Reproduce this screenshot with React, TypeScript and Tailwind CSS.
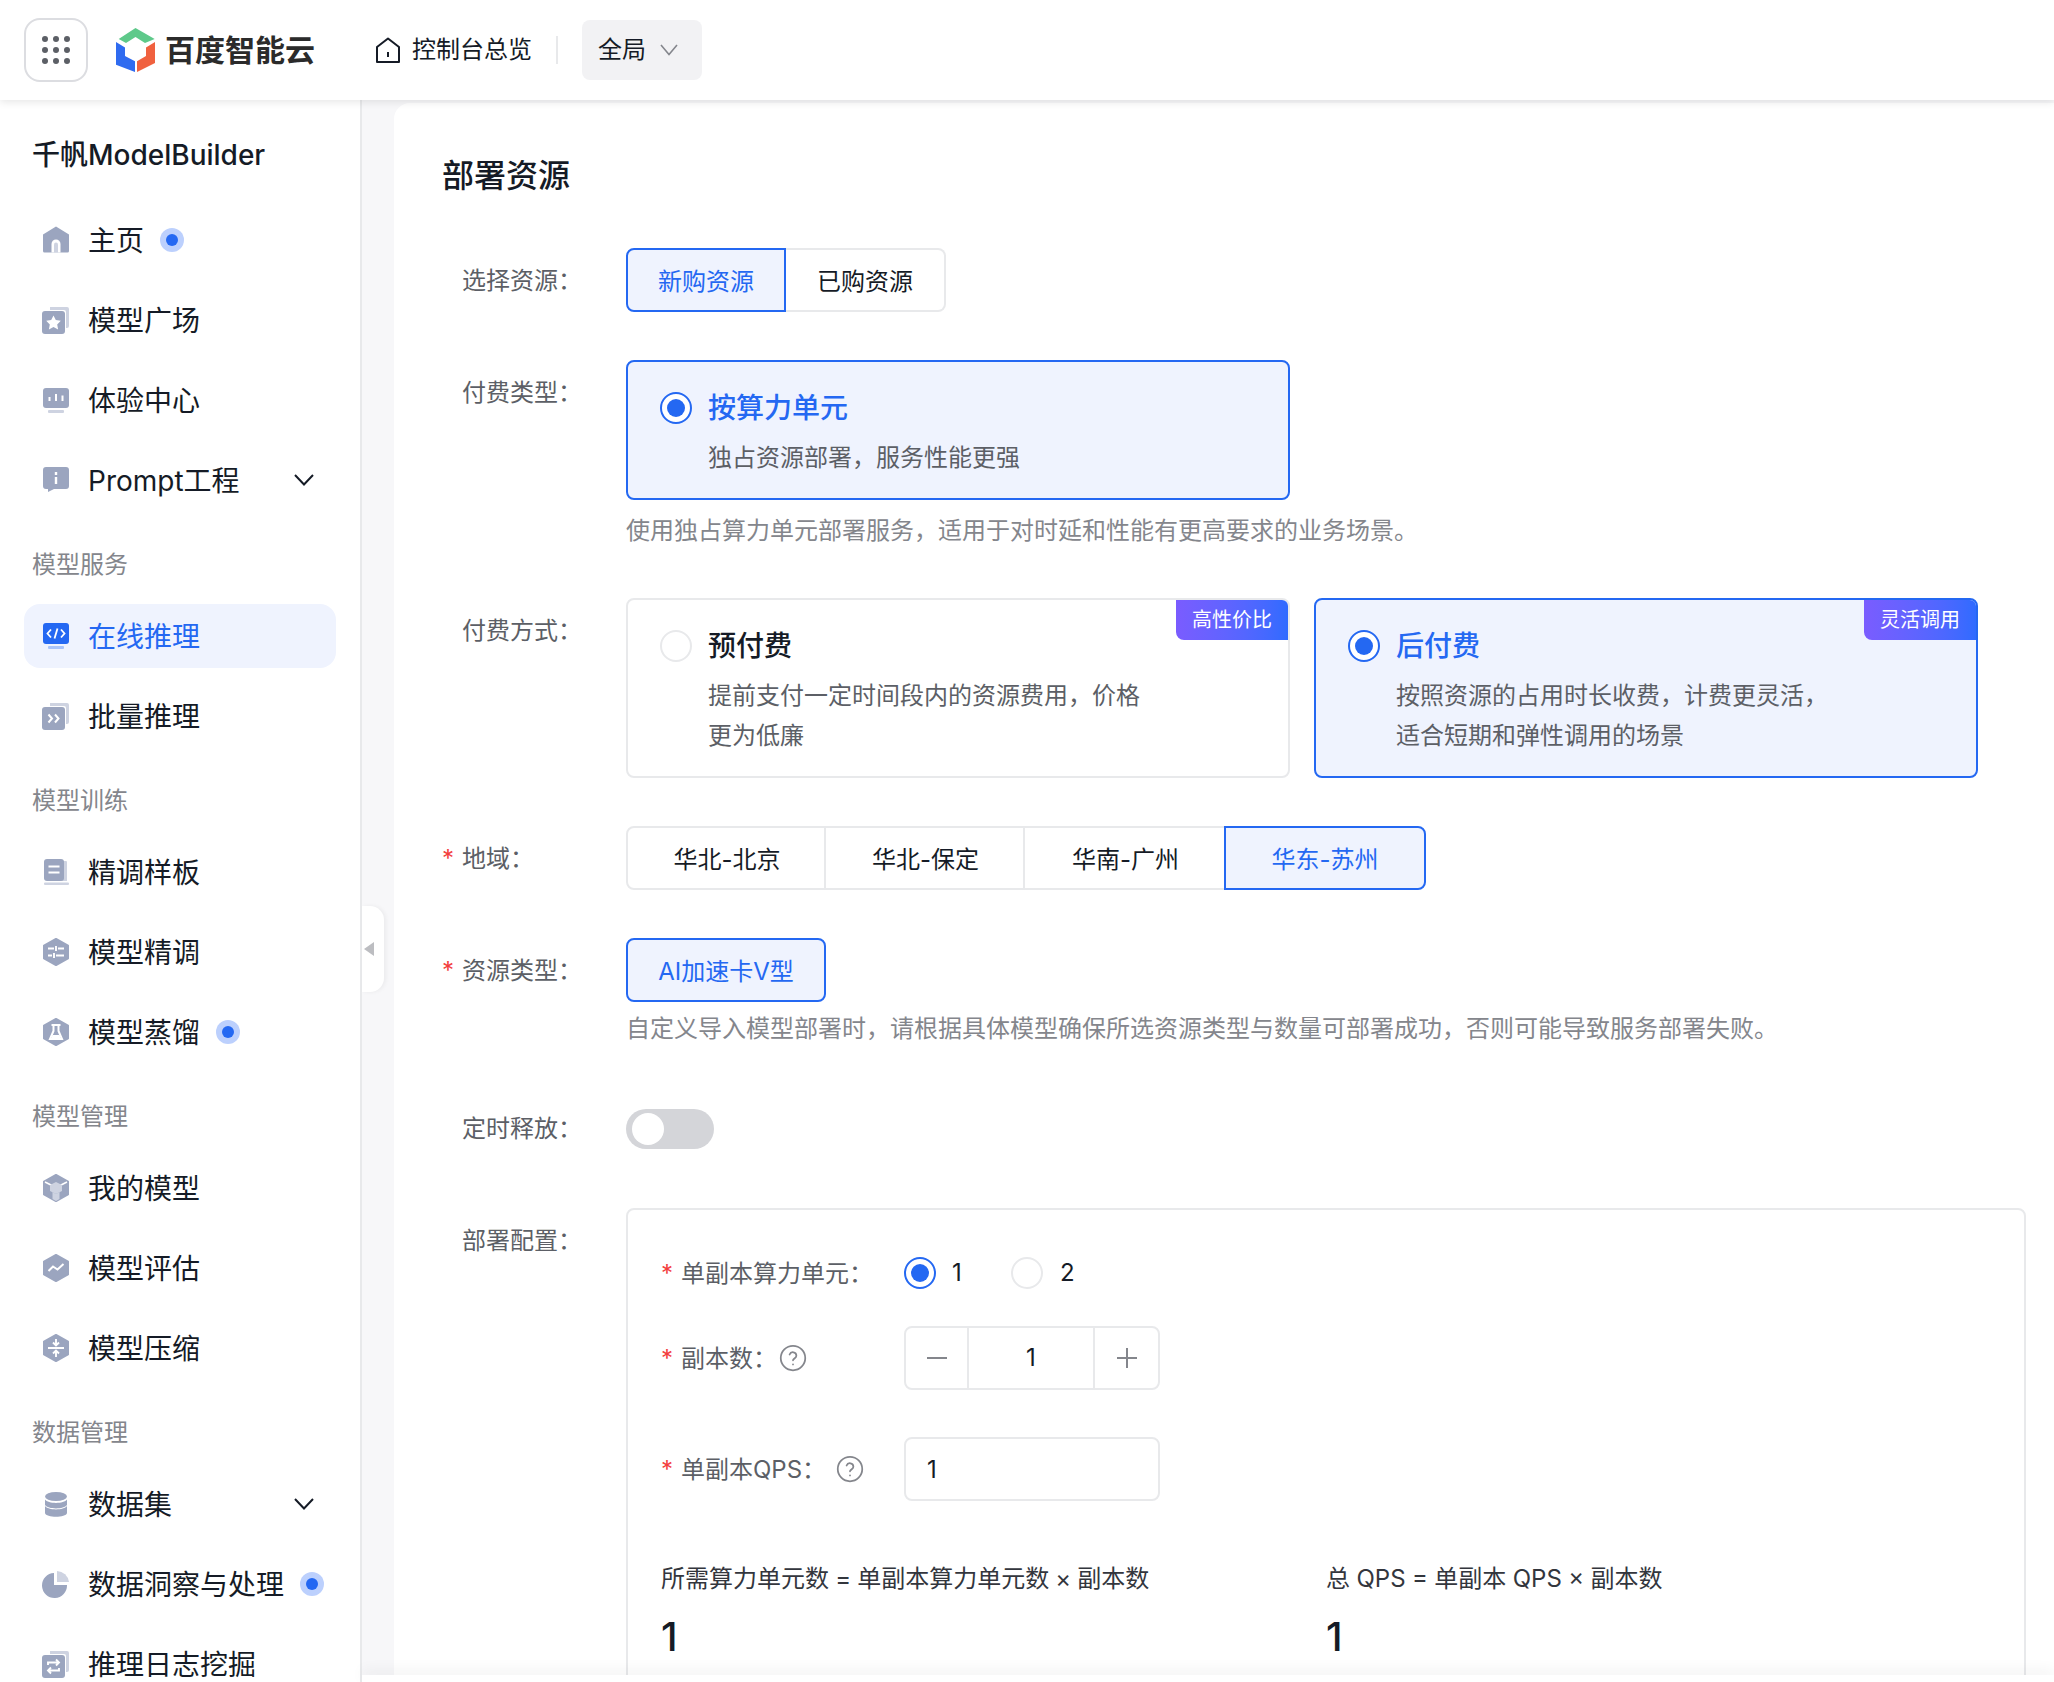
import React from "react";

const D = "#9ba5bf";
const L = "#ced3e1";
const BLUE = "#2468f2";

function Hex({ fill = D, children }: { fill?: string; children?: React.ReactNode }) {
  return (
    <svg width="28" height="28" viewBox="0 0 28 28" fill="none">
      <path d="M14 1 L26 7.6 V20.4 L14 27 L2 20.4 V7.6 Z" fill={fill} stroke={fill} strokeWidth="2" strokeLinejoin="round" />
      {children}
    </svg>
  );
}

function Stack({ children }: { children?: React.ReactNode }) {
  return (
    <svg width="28" height="28" viewBox="0 0 28 28" fill="none">
      <path d="M8 1 H25 a2 2 0 0 1 2 2 V20 a2 2 0 0 1-2 2 h-1 V6 a2 2 0 0 0-2-2 H8 Z" fill={L} />
      <rect x="0" y="5" width="23" height="23" rx="3" fill={D} />
      {children}
    </svg>
  );
}

const icons: Record<string, React.ReactNode> = {
  home: (
    <svg width="28" height="28" viewBox="0 0 28 28" fill="none">
      <path d="M14 0.5 L27 8.5 V25 a1.5 1.5 0 0 1-1.5 1.5 H2.5 A1.5 1.5 0 0 1 1 25 V8.5 Z" fill={D} />
      <path d="M9.5 26.5 V18 a4.5 4.5 0 0 1 9 0 V26.5 Z" fill="#fff" />
      <path d="M12 26.5 V18.5 a2 2 0 0 1 4 0 V26.5 Z" fill={L} />
    </svg>
  ),
  star: (
    <Stack>
      <path d="M11.5 9.5 l2.3 4.6 5 .7-3.6 3.6 .9 5-4.6-2.4-4.6 2.4 .9-5-3.6-3.6 5-.7 Z" fill="#fff" />
    </Stack>
  ),
  monitor: (
    <svg width="28" height="28" viewBox="0 0 28 28" fill="none">
      <rect x="1" y="2" width="26" height="20" rx="3" fill={D} />
      <rect x="6" y="24" width="16" height="3" rx="1" fill={L} />
      <path d="M7.5 11 V15 M14 8 V15 M20.5 9.5 V15" stroke="#fff" strokeWidth="2" />
    </svg>
  ),
  info: (
    <svg width="28" height="28" viewBox="0 0 28 28" fill="none">
      <path d="M4 1 H24 a3 3 0 0 1 3 3 V20 a3 3 0 0 1-3 3 H12 L6 26 V23 H4 a3 3 0 0 1-3-3 V4 a3 3 0 0 1 3-3 Z" fill={D} />
      <path d="M14 6 V9 M14 11 V18" stroke="#fff" strokeWidth="2.4" />
    </svg>
  ),
  code: (
    <svg width="28" height="28" viewBox="0 0 28 28" fill="none">
      <rect x="1" y="1" width="26" height="21" rx="3" fill={BLUE} />
      <rect x="6" y="24" width="16" height="3" rx="1" fill="#a9c4fa" />
      <path d="M9 7.5 L5.5 11.5 L9 15.5 M19 7.5 L22.5 11.5 L19 15.5 M15.5 6.5 L12.5 16.5" stroke="#fff" strokeWidth="1.8" />
    </svg>
  ),
  batch: (
    <Stack>
      <path d="M6.5 12.5 L10 16.5 L6.5 20.5 M13 12.5 L16.5 16.5 L13 20.5" stroke="#fff" strokeWidth="2" />
    </Stack>
  ),
  book: (
    <svg width="28" height="28" viewBox="0 0 28 28" fill="none">
      <path d="M19 3 H24 a1 1 0 0 1 1 1 V23 H19 Z" fill={L} />
      <rect x="2" y="1" width="20" height="22" rx="3" fill={D} />
      <rect x="2" y="24.5" width="25" height="2.5" rx="1" fill={L} />
      <path d="M6.5 8.5 H17.5 M6.5 14.5 H17.5" stroke="#fff" strokeWidth="2.2" />
    </svg>
  ),
  tune: (
    <Hex>
      <path d="M6 10.5 H12 M16 10.5 H22 M6 17.5 H10 M14 17.5 H22 M14 8 V13 M12 15 V20" stroke="#fff" strokeWidth="1.9" />
    </Hex>
  ),
  flask: (
    <Hex>
      <path d="M9.5 7 H18.5 M11.5 7 V13 L8 21 H20 L16.5 13 V7" stroke="#fff" strokeWidth="2" fill="none" />
      <path d="M10.5 17 H17.5 L19 21 H9 Z" fill="#fff" />
    </Hex>
  ),
  cube: (
    <svg width="28" height="28" viewBox="0 0 28 28" fill="none">
      <path d="M14 1 L26 7.6 V20.4 L14 27 L2 20.4 V7.6 Z" fill={D} stroke={D} strokeWidth="2" strokeLinejoin="round" />
      <path d="M3 8 L14 13.5 L25 8" stroke="#fff" strokeWidth="1.6" />
      <path d="M8 11 L14 8 L20 11 V17 L14 20 L8 17 Z" fill={L} />
      <path d="M10.5 18 L14 20 L17.5 18 V25 L14 27 L10.5 25 Z" fill={L} />
    </svg>
  ),
  chart: (
    <Hex>
      <path d="M6.5 17 L11 12.5 L15.5 15.5 L21.5 10" stroke="#fff" strokeWidth="2" fill="none" />
    </Hex>
  ),
  compress: (
    <Hex>
      <path d="M6 14 H22" stroke="#fff" strokeWidth="2" />
      <path d="M14 5 V11 M11 8.5 L14 11.5 L17 8.5 M14 23 V17 M11 19.5 L14 16.5 L17 19.5" stroke="#fff" strokeWidth="1.9" />
    </Hex>
  ),
  db: (
    <svg width="28" height="28" viewBox="0 0 28 28" fill="none">
      <ellipse cx="14" cy="6.5" rx="11" ry="4.5" fill={D} />
      <path d="M3 8.5 C6 13 22 13 25 8.5 V14 C22 18.5 6 18.5 3 14 Z" fill={D} transform="translate(0 1)" />
      <path d="M3 15 C6 19.5 22 19.5 25 15 V22 C24 27 4 27 3 22 Z" fill={D} transform="translate(0 1)" />
    </svg>
  ),
  pie: (
    <svg width="28" height="28" viewBox="0 0 28 28" fill="none">
      <path d="M12 3 V15 H25 A12.5 12.5 0 1 1 12 3 Z" fill={D} />
      <path d="M15 1 A12.5 12.5 0 0 1 27 12 H15 Z" fill={L} />
    </svg>
  ),
  loop: (
    <Stack>
      <path d="M6 15 V12.5 H17 M14 9.5 L17 12.5 L14 15.5 M17 18 V20.5 H6 M9 17.5 L6 20.5 L9 23.5" stroke="#fff" strokeWidth="1.9" fill="none" />
    </Stack>
  ),
};

function Chevron() {
  return (
    <svg width="20" height="12" viewBox="0 0 20 12" fill="none" className="ml-auto mr-[22px]">
      <path d="M1 1 L10 10.5 L19 1" stroke="#151b26" strokeWidth="2" />
    </svg>
  );
}

function Dot() {
  return (
    <span className="ml-[16px] flex h-[24px] w-[24px] items-center justify-center rounded-full bg-[#bcd0fd]">
      <span className="h-[12px] w-[12px] rounded-full bg-[#2468f2]" />
    </span>
  );
}

function Item({ icon, text, dot, chevron, active }: { icon: string; text: string; dot?: boolean; chevron?: boolean; active?: boolean }) {
  return (
    <div
      className={
        active
          ? "mx-[24px] mb-[16px] flex h-[64px] items-center gap-[18px] rounded-[16px] bg-[#eff3fe] pl-[18px] text-[28px] text-[#2468f2]"
          : "mx-[24px] mb-[16px] flex h-[64px] items-center gap-[18px] pl-[18px] text-[28px] text-[#151b26]"
      }
    >
      {icons[icon]}
      <span className="flex flex-1 items-center whitespace-nowrap">
        <span className="pt-[1px]">{text}</span>
        {dot && <Dot />}
        {chevron && <Chevron />}
      </span>
    </div>
  );
}

function Section({ text }: { text: string }) {
  return <div className="mb-[24px] mt-[36px] h-[32px] pl-[32px] pt-[1px] text-[24px] leading-[32px] text-[#84868c]">{text}</div>;
}

function Sidebar() {
  return (
    <aside className="w-[362px] shrink-0 border-r-2 border-[#e8e9eb] bg-white">
      <div className="mb-[33px] mt-[35px] pl-[32px] text-[28px] font-medium leading-[40px] text-[#151b26]">千帆ModelBuilder</div>
      <Item icon="home" text="主页" dot />
      <Item icon="star" text="模型广场" />
      <Item icon="monitor" text="体验中心" />
      <Item icon="info" text="Prompt工程" chevron />
      <Section text="模型服务" />
      <Item icon="code" text="在线推理" active />
      <Item icon="batch" text="批量推理" />
      <Section text="模型训练" />
      <Item icon="book" text="精调样板" />
      <Item icon="tune" text="模型精调" />
      <Item icon="flask" text="模型蒸馏" dot />
      <Section text="模型管理" />
      <Item icon="cube" text="我的模型" />
      <Item icon="chart" text="模型评估" />
      <Item icon="compress" text="模型压缩" />
      <Section text="数据管理" />
      <Item icon="db" text="数据集" chevron />
      <Item icon="pie" text="数据洞察与处理" dot />
      <Item icon="loop" text="推理日志挖掘" />
    </aside>
  );
}

function Header() {
  return (
    <header className="relative z-10 flex h-[100px] shrink-0 items-center bg-white pl-[24px] shadow-[0_2px_8px_rgba(0,0,0,0.1)]">
      <div className="flex h-[64px] w-[64px] items-center justify-center rounded-[16px] border-2 border-[#dcdde1]">
        <div className="grid grid-cols-3 gap-[5px]">
          {[0, 1, 2, 3, 4, 5, 6, 7, 8].map((i) => (
            <span key={i} className="h-[6px] w-[6px] rounded-full bg-[#5c5f66]" />
          ))}
        </div>
      </div>
      <svg width="40" height="44" viewBox="0 0 40 44" className="ml-[28px]" fill="none">
        <path d="M19.5 0 L38.7 11 L29 15 L19.5 9 L10 15 L2.7 11 Z" fill="#5ec98a" />
        <path d="M0 14 L9 19.5 V28 L19 33.3 V44 L0 36.7 Z" fill="#2f6bf0" />
        <path d="M39 14 L30 19.5 V28 L21 33.3 V44 L39 35 Z" fill="#f0613f" />
      </svg>
      <span className="ml-[9px] text-[30px] font-bold leading-[40px] text-[#2b2b2b]">百度智能云</span>
      <svg width="24" height="26" viewBox="0 0 24 26" fill="none" className="ml-[61px]">
        <path d="M12 1.5 L23 10 V25 H1 V10 Z" stroke="#151b26" strokeWidth="2" strokeLinejoin="round" />
        <path d="M12 15 V20" stroke="#151b26" strokeWidth="2" />
      </svg>
      <span className="ml-[12px] text-[24px] text-[#151b26]">控制台总览</span>
      <span className="ml-[24px] h-[28px] w-[2px] bg-[#e8e9eb]" />
      <div className="ml-[24px] flex h-[60px] w-[120px] items-center rounded-[8px] bg-[#f2f2f4] pl-[16px] text-[24px] text-[#151b26]">
        全局
        <svg width="18" height="12" viewBox="0 0 18 12" fill="none" className="ml-[14px]">
          <path d="M1 1 L9 10.5 L17 1" stroke="#84868c" strokeWidth="1.6" />
        </svg>
      </div>
    </header>
  );
}

function Label({ text, req, extra }: { text: string; req?: boolean; extra?: string }) {
  return (
    <div className={"flex w-[184px] shrink-0 text-[24px] leading-[32px] text-[#5c5f66] " + (extra ?? "mt-[17px]")}>
      <span className="w-[20px] text-[#f33e3e]">{req ? "*" : ""}</span>
      {text}：
    </div>
  );
}

function Radio({ on }: { on?: boolean }) {
  return on ? (
    <span className="flex h-[32px] w-[32px] shrink-0 items-center justify-center rounded-full border-2 border-[#2468f2] bg-white">
      <span className="h-[18px] w-[18px] rounded-full bg-[#2468f2]" />
    </span>
  ) : (
    <span className="block h-[32px] w-[32px] shrink-0 rounded-full border-2 border-[#e8e9eb] bg-white" />
  );
}

function PayCard({ on, title, lines, badge }: { on?: boolean; title: string; lines: string[]; badge: string }) {
  return (
    <div
      className={
        on
          ? "relative h-[180px] w-[664px] rounded-[8px] border-2 border-[#2468f2] bg-[#eff3fe] pl-[32px] pt-[30px]"
          : "relative h-[180px] w-[664px] rounded-[8px] border-2 border-[#e8e9eb] bg-white pl-[32px] pt-[30px]"
      }
    >
      <div className="flex h-[32px] items-center gap-[16px]">
        <Radio on={on} />
        <span className={on ? "text-[28px] font-medium text-[#2468f2]" : "text-[28px] font-medium text-[#151b26]"}>{title}</span>
      </div>
      <div className="ml-[48px] mt-[14px] text-[24px] leading-[40px] text-[#5c5f66]">
        {lines.map((l) => (
          <div key={l}>{l}</div>
        ))}
      </div>
      <div className="absolute right-0 top-0 flex h-[40px] w-[112px] items-center justify-center rounded-bl-[8px] rounded-tr-[6px] bg-gradient-to-r from-[#7a5cff] to-[#2f6bff] text-[20px] text-white">
        {badge}
      </div>
    </div>
  );
}

function Qmark({ extra }: { extra: string }) {
  return (
    <svg width="28" height="28" viewBox="0 0 24 24" fill="none" stroke="#84868c" strokeWidth="1.5" strokeLinecap="round" className={extra}>
      <circle cx="12" cy="12" r="10.5" />
      <path d="M9.1 9a3 3 0 0 1 5.8 1c0 2-2.9 2.6-2.9 4" />
      <path d="M12 17.5h.01" />
    </svg>
  );
}

function Main() {
  return (
    <main className="min-w-0 flex-1 bg-[#f7f7f9] pl-[32px] pt-[3px]">
      <div className="h-full rounded-tl-[16px] bg-white pl-[48px]">
        <h1 className="pt-[51px] text-[32px] font-medium leading-[44px] text-[#151b26]">部署资源</h1>

        <div className="mt-[50px] flex">
          <Label text="选择资源" />
          <div className="flex text-[24px]">
            <div className="flex h-[64px] w-[160px] items-center justify-center rounded-l-[8px] border-2 border-[#2468f2] bg-[#eff3fe] pt-[4px] text-[#2468f2]">新购资源</div>
            <div className="flex h-[64px] w-[160px] items-center justify-center rounded-r-[8px] border-2 border-l-0 border-[#e8e9eb] pt-[4px] text-[#151b26]">已购资源</div>
          </div>
        </div>

        <div className="mt-[48px] flex">
          <Label text="付费类型" />
          <div>
            <div className="h-[140px] w-[664px] rounded-[8px] border-2 border-[#2468f2] bg-[#eff3fe] pl-[32px] pt-[30px]">
              <div className="flex h-[32px] items-center gap-[16px]">
                <Radio on />
                <span className="text-[28px] font-medium text-[#2468f2]">按算力单元</span>
              </div>
              <div className="ml-[48px] mt-[14px] text-[24px] leading-[40px] text-[#5c5f66]">独占资源部署，服务性能更强</div>
            </div>
            <div className="mt-[15px] whitespace-nowrap text-[24px] leading-[32px] text-[#84868c]">使用独占算力单元部署服务，适用于对时延和性能有更高要求的业务场景。</div>
          </div>
        </div>

        <div className="mt-[51px] flex">
          <Label text="付费方式" />
          <div className="flex gap-[24px]">
            <PayCard title="预付费" lines={["提前支付一定时间段内的资源费用，价格", "更为低廉"]} badge="高性价比" />
            <PayCard on title="后付费" lines={["按照资源的占用时长收费，计费更灵活，", "适合短期和弹性调用的场景"]} badge="灵活调用" />
          </div>
        </div>

        <div className="mt-[48px] flex">
          <Label text="地域" req />
          <div className="flex text-[24px] text-[#151b26]">
            <div className="flex h-[64px] w-[200px] items-center justify-center rounded-l-[8px] border-2 border-[#e8e9eb] pl-[2px] pt-[4px]">华北-北京</div>
            <div className="flex h-[64px] w-[199px] items-center justify-center border-2 border-l-0 border-[#e8e9eb] pl-[2px] pt-[4px]">华北-保定</div>
            <div className="flex h-[64px] w-[199px] items-center justify-center border-y-2 border-[#e8e9eb] pl-[2px] pt-[4px]">华南-广州</div>
            <div className="flex h-[64px] w-[202px] items-center justify-center rounded-r-[8px] border-2 border-[#2468f2] bg-[#eff3fe] pt-[4px] text-[#2468f2]">华东-苏州</div>
          </div>
        </div>

        <div className="mt-[48px] flex">
          <Label text="资源类型" req />
          <div>
            <div className="flex h-[64px] w-[200px] items-center justify-center rounded-[8px] border-2 border-[#2468f2] bg-[#eff3fe] pt-[4px] text-[24px] text-[#2468f2]">AI加速卡V型</div>
            <div className="mt-[11px] whitespace-nowrap text-[24px] leading-[32px] text-[#84868c]">自定义导入模型部署时，请根据具体模型确保所选资源类型与数量可部署成功，否则可能导致服务部署失败。</div>
          </div>
        </div>

        <div className="mt-[64px] flex items-center">
          <Label text="定时释放" extra="mt-0" />
          <div className="flex h-[40px] w-[88px] items-center rounded-full bg-[#d4d5d9] pl-[6px]">
            <span className="h-[32px] w-[32px] rounded-full bg-white" />
          </div>
        </div>

        <div className="mt-[59px] flex">
          <Label text="部署配置" />
          <div className="w-[1400px] rounded-[8px] border-2 border-[#e8e9eb] pb-[60px] pl-[33px] pt-[47px]">
            <div className="flex h-[32px] items-center text-[24px] leading-[32px]">
              <div className="flex w-[243px] pt-[2px] text-[#5c5f66]">
                <span className="w-[20px] text-[#f33e3e]">*</span>单副本算力单元：
              </div>
              <Radio on />
              <span className="ml-[16px] w-[14px] text-[#151b26]">1</span>
              <span className="ml-[45px] flex">
                <Radio />
              </span>
              <span className="ml-[17px] text-[#151b26]">2</span>
            </div>

            <div className="mt-[37px] flex h-[64px] items-center text-[24px]">
              <div className="flex w-[243px] items-center text-[#5c5f66]">
                <span className="w-[20px] pt-[2px] text-[#f33e3e]">*</span>
                <span className="pt-[2px]">副本数：</span>
                <Qmark extra="ml-[2px]" />
              </div>
              <div className="flex h-[64px] w-[256px] rounded-[8px] border-2 border-[#e8e9eb] text-[#151b26]">
                <div className="flex w-[63px] items-center justify-center border-r-2 border-[#e8e9eb]">
                  <span className="h-[2px] w-[20px] bg-[#84868c]" />
                </div>
                <div className="flex flex-1 items-center justify-center">1</div>
                <div className="flex w-[65px] items-center justify-center border-l-2 border-[#e8e9eb]">
                  <svg width="20" height="20" viewBox="0 0 20 20">
                    <path d="M0 10 H20 M10 0 V20" stroke="#84868c" strokeWidth="2" />
                  </svg>
                </div>
              </div>
            </div>

            <div className="mt-[47px] flex h-[64px] items-center text-[24px]">
              <div className="flex w-[243px] items-center text-[#5c5f66]">
                <span className="w-[20px] pt-[2px] text-[#f33e3e]">*</span>
                <span className="pt-[2px]">单副本QPS：</span>
                <Qmark extra="ml-[10px]" />
              </div>
              <div className="flex h-[64px] w-[256px] items-center rounded-[8px] border-2 border-[#e8e9eb] pl-[21px] pt-[2px] text-[#151b26]">1</div>
            </div>

            <div className="mt-[61px] flex">
              <div className="w-[665px]">
                <div className="pt-[1px] text-[24px] leading-[32px] text-[#33363d] [word-spacing:-0.6px]">所需算力单元数 = 单副本算力单元数 × 副本数</div>
                <div className="mt-[18px] text-[40px] font-medium leading-[48px] text-[#151b26]">1</div>
              </div>
              <div>
                <div className="pt-[1px] text-[24px] leading-[32px] text-[#33363d] [word-spacing:-0.3px]">总 QPS = 单副本 QPS × 副本数</div>
                <div className="mt-[18px] text-[40px] font-medium leading-[48px] text-[#151b26]">1</div>
              </div>
            </div>
          </div>
        </div>
      </div>
    </main>
  );
}

export default function App() {
  return (
    <div className="relative flex h-[1682px] w-[2054px] flex-col overflow-hidden bg-white font-[Inter,'Noto_Sans_CJK_SC',sans-serif]">
      <Header />
      <div className="flex min-h-0 flex-1">
        <Sidebar />
        <Main />
      </div>
      {/* sidebar collapse tab, floating over the page gutter */}
      <div className="absolute left-[362px] top-[906px] flex h-[86px] w-[22px] items-center rounded-r-[14px] bg-white pl-[2px] shadow-[2px_0_4px_rgba(0,0,0,0.05)]">
        <svg width="10" height="14" viewBox="0 0 10 14">
          <path d="M10 0 V14 L0 7 Z" fill="#bcbdc1" />
        </svg>
      </div>
      {/* sticky footer edge */}
      <div className="absolute bottom-0 left-[362px] right-0 h-[7px] bg-white shadow-[0_-4px_14px_rgba(0,0,0,0.07)]" />
    </div>
  );
}
